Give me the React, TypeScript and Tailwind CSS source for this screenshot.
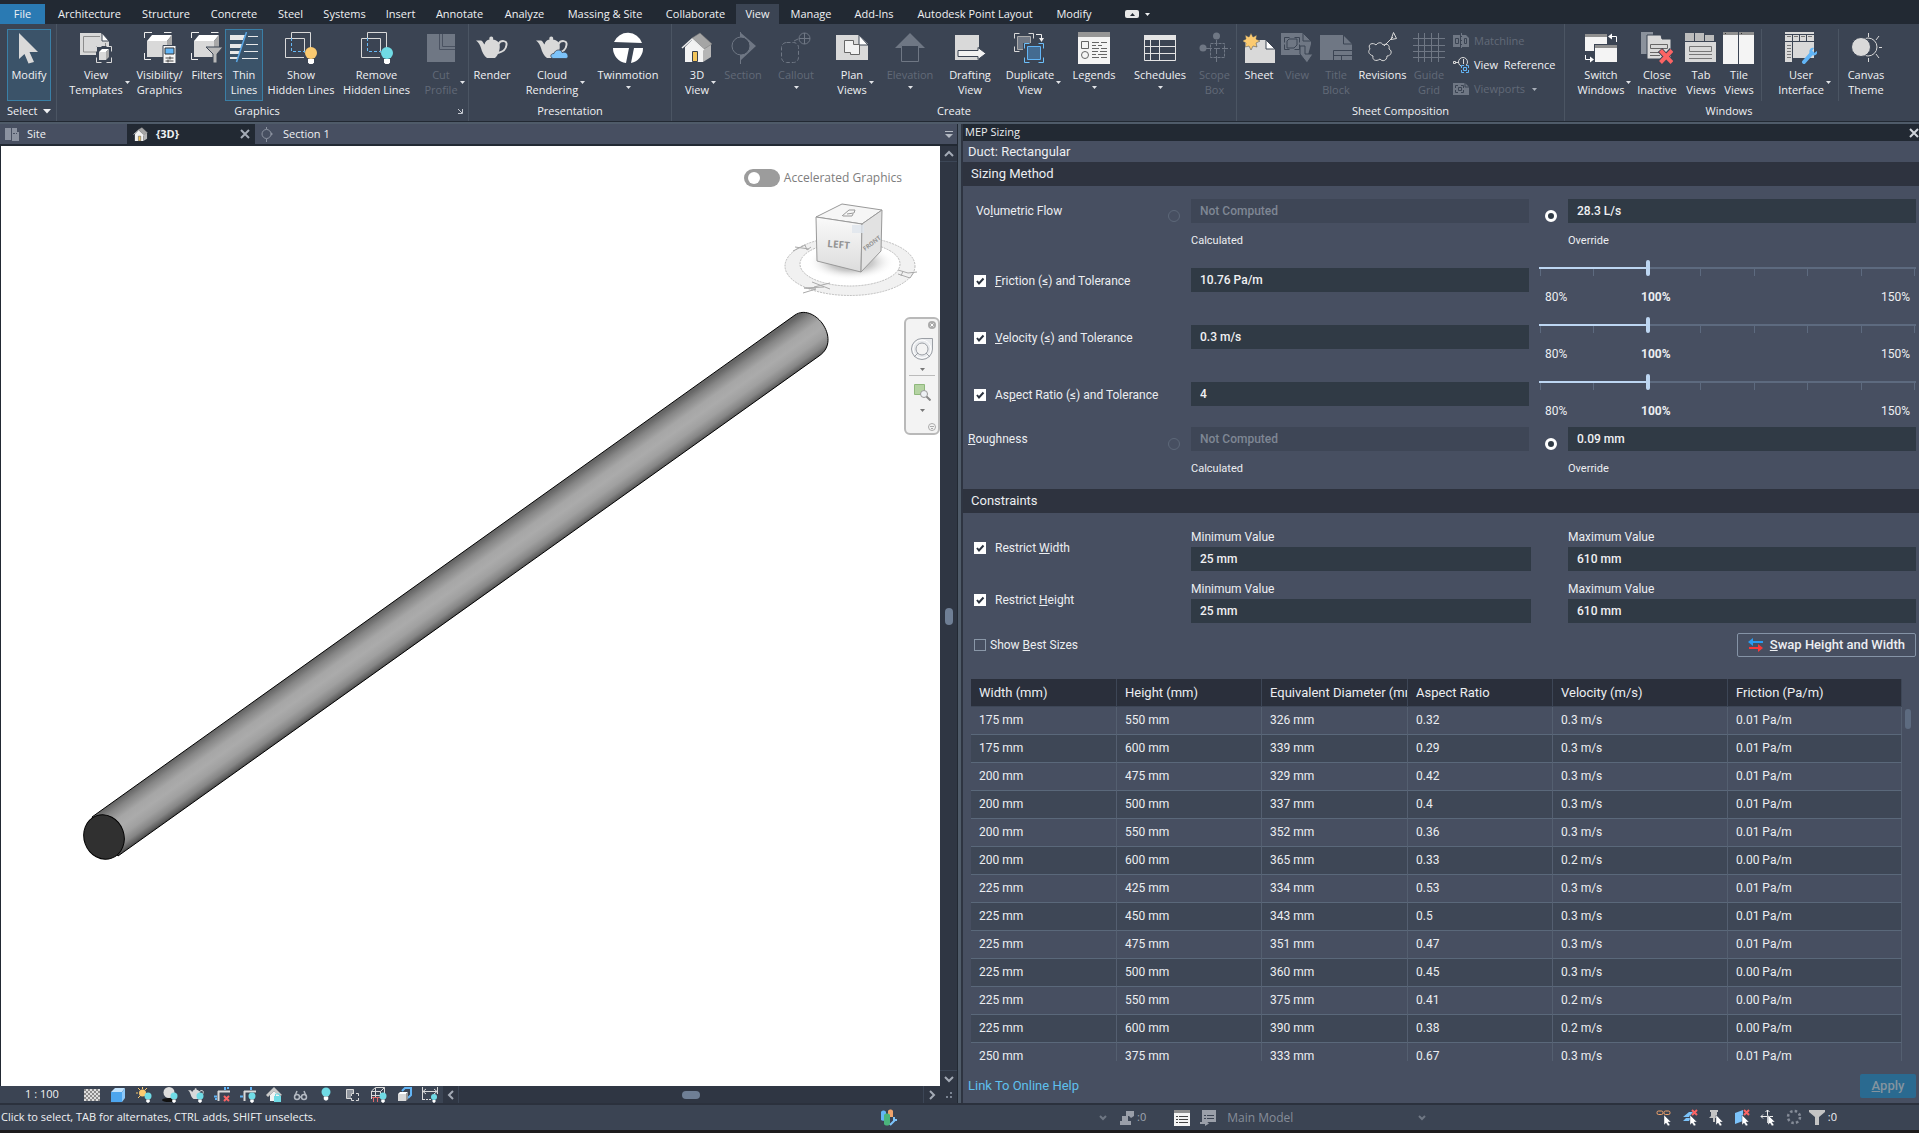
import { useState } from "react";
import type { ReactNode } from "react";
import { twJoin } from "tailwind-merge";

const LIGHT = "#d9d9d9";
const DIM = "#6f7784";
const BG = "#3b4453";

const Icon = ({ size = 32, children }: Readonly<{ size?: number; children: ReactNode }>) => (
  <svg
    className="block shrink-0"
    width={size}
    height={size}
    viewBox={`0 0 ${size} ${size}`}
    fill="none"
    aria-hidden="true"
  >
    {children}
  </svg>
);

const Brackets = ({ x, y, w, h, color = LIGHT }: Readonly<{ x: number; y: number; w: number; h: number; color?: string }>) => (
  <path
    d={`M${x} ${y + 5}V${y}h5M${x + w - 5} ${y}h5v5M${x + w} ${y + h - 5}v5h-5M${x + 5} ${y + h}h-5v-5`}
    stroke={color}
  />
);

const Box = () => (
  <>
    <path d="M3 9 8 3h20l-5 6z" fill="#fff" />
    <path d="M3 9h20v16H3z" fill={LIGHT} />
    <path d="m23 9 5-6v16l-5 6z" fill="#a8a8a8" />
    <path d="M.5 6V.5H8M20 .5h7.5M.5 21v6.5H7" stroke="#eee" />
  </>
);

const Bulb = ({ x, y, r, color }: Readonly<{ x: number; y: number; r: number; color: string }>) => (
  <>
    <circle cx={x} cy={y} r={r} fill={color} />
    <path d={`M${x - r / 2} ${y + r}h${r}v${r * 0.6}l-${r * 0.3} ${r * 0.3}h-${r * 0.4}l-${r * 0.3}-${r * 0.3}z`} fill="#fff" />
  </>
);

const Teapot = () => (
  <>
    <path
      d="M0 8.5h5c1.5 0 2.5 3 3.5 4C9 9.5 11 8 13.5 7.5c-1.5-4 5-4 3.5 0 3 .5 5.5 2 6.5 4.5 1 5-1 11-4.5 14h-8c-3-2-5-6-6-10C4 13 2.5 10 0 8.5z"
      fill={LIGHT}
    />
    <path d="M22.5 12c2-4 9-4 8 1-.5 4-4 7-8.5 8" stroke={LIGHT} strokeWidth="2" />
  </>
);

const House = () => (
  <>
    <path d="M4 15 12 7l10 9v14H4z" fill="#f2f2f2" />
    <path d="m22 15 8-4v14l-8 5z" fill="#b5b5b5" />
    <path d="M11 6 19 1l12 11-8 5z" fill="#a5a5a5" stroke="#777" strokeWidth=".5" />
    <path d="m1 16 10-9 12 11" stroke="#eee" strokeWidth="1.5" />
    <path d="M11.5 29.5v-10h5v10z" fill="#f2c45a" stroke="#39404c" />
  </>
);

const Mini = ({ x, y }: Readonly<{ x: number; y: number }>) => (
  <>
    <path d={`M${x} ${y}h22v17H${x}z`} fill="#f4f4f4" />
    <path d={`M${x} ${y}h22v3H${x}z`} fill="#8f8f8f" />
  </>
);

const ICONS = {
  modify: <path d="M6 1 25 20h-8.5L21 30l-5.5 1.5-4-9.5L6 27z" fill={LIGHT} />,
  templates: (
    <>
      <path d="M0 1h21l8 8v14H0z" fill={LIGHT} />
      <path d="M16 20H3.5V4.5H20M25.5 11v3" stroke="#8c8c8c" />
      <path d="m22 1 7 8h-7z" fill="#fff" stroke={BG} />
      <path d="M16 14h16v17H16z" fill={BG} />
      <Brackets x={16.5} y={14.5} w={15} h={16} />
      <path d="m19 20 3-3h7l-3 3z" fill="#fff" />
      <path d="M19 20h7v8h-7z" fill={LIGHT} />
      <path d="m26 20 3-3v8l-3 3z" fill="#aaa" />
    </>
  ),
  visibility: (
    <>
      <Box />
      <path d="M19 13.5h13v18H19z" fill="#f5f5f5" stroke={BG} />
      <path d="M21 16h9v6h-9z" fill="#62b5f6" stroke="#333" />
      <path d="M21.5 26h8M21.5 29h8M26 24.5v3M24 27.5v3" stroke="#444" />
    </>
  ),
  filters: (
    <>
      <Box />
      <path d="M15 15h17l-6 7v9h-4v-9z" fill="#b8b8b8" stroke={BG} />
    </>
  ),
  thin: (
    <>
      <path d="M2 3h15l-2 5H2zM2 12h12l-1 4H2zM2 19h10l-1 3H2zM2 25h8v2H2z" fill="#e8e8e8" />
      <path d="M20 4.5h10M18 12.5h12M16 19.5h14M14 26.5h16" stroke="#e8e8e8" />
      <path d="M18.5 0 8.5 30" stroke="#5ba7e6" strokeWidth="1.5" />
    </>
  ),
  show: (
    <>
      <path d="M6.5 6V.5h19v17M.5 6.5h19v14M19 25.5H.5v-19" stroke={LIGHT} />
      <path d="M6.5 6v13.5H20" stroke="#66b8f5" strokeDasharray="3 2" />
      <Bulb x={26} y={21} r={6} color="#fbca70" />
    </>
  ),
  remove: (
    <>
      <path d="M6.5 6V.5h19v17M.5 6.5h19v14M19 25.5H.5v-19" stroke={LIGHT} />
      <path d="M6.5 6v13.5H20" stroke="#66b8f5" strokeDasharray="3 2" />
      <Bulb x={26} y={21} r={6} color="#70dbe5" />
    </>
  ),
  cut: (
    <>
      <path d="M2 2h28v28H2z" fill={DIM} />
      <path d="M14.5 2v15.5H30M17.5 2v12.5H30" stroke="#4a5261" />
    </>
  ),
  render: <Teapot />,
  cloud: (
    <>
      <Teapot />
      <path d="M17 26.5c-3-1-3-5 1-5 1-4 7-5 8-1 4-1 6 1 6 4 0 2-2 2-3 2z" fill="#7cc3fa" stroke={BG} strokeWidth=".8" />
    </>
  ),
  twin: (
    <>
      <path d="M2 10a15 15 0 0 1 28 1zM1 16h16l-3 15A15 15 0 0 1 1 16z" fill="#fff" />
      <path d="M22 16h9a15 15 0 0 1-12 15z" fill="#fff" />
    </>
  ),
  house: <House />,
  section: (
    <>
      <path d="m14 1 15 13-15 14V23a9 9 0 0 0 0-17z" fill={DIM} />
      <circle cx="14" cy="14" r="9" fill={BG} stroke={DIM} />
      <path d="M13.5 0v5M13.5 23v9" stroke={DIM} />
    </>
  ),
  callout: (
    <>
      <rect x="1.5" y="10.5" width="17" height="20" rx="5" stroke={DIM} strokeDasharray="4 2" />
      <path d="m14 9 4-2M19 6.5h11M24.5 1v11" stroke={DIM} />
      <circle cx="24.5" cy="6.5" r="5.5" stroke={DIM} />
    </>
  ),
  plan: (
    <>
      <path d="M0 3h23l9 9v16H0z" fill={LIGHT} />
      <path d="m23 3 9 10h-9z" fill="#fff" stroke={BG} />
      <path d="M8.5 8.5h9v4h6v10h-9v-2h-6z" fill="#f2f2f2" stroke="#666" />
    </>
  ),
  elevation: (
    <>
      <path d="m16 1 15 15H1z" fill={DIM} />
      <path d="M7.5 13.5h17v16h-17z" fill={BG} stroke={DIM} />
    </>
  ),
  drafting: (
    <>
      <path d="M1 3h24v25H1z" fill={LIGHT} />
      <path d="M4 18.5h20v-3l8 6-8 6v-3H4z" fill="#f2f2f2" stroke={BG} />
    </>
  ),
  duplicate: (
    <>
      <Brackets x={0.5} y={1.5} w={19} h={18} />
      <path d="M3.5 4.5h13v13h-13z" fill={DIM} stroke="#aaa" />
      <path d="M9 11h23v21H9z" fill={BG} />
      <Brackets x={10.5} y={11.5} w={19} h={19} color="#6cc0fb" />
      <path d="M13.5 14.5h13v13h-13z" fill="#446b91" stroke="#62b5f6" />
      <path d="M22 2.5h5.5V7" stroke="#eee" />
      <path d="M25 6h5l-2.5 4z" fill="#eee" />
    </>
  ),
  legends: (
    <>
      <path d="M0 0h32v32H0z" fill="#f4f4f4" />
      <path d="M0 0h32v5H0z" fill="#969696" />
      <path
        d="M3.5 9.5h7v7h-7zM14 10.5h7M23 10.5h6M14 13.5h4M20 13.5h4M14 16.5h7M23 16.5h6M14 19.5h6M22 19.5h7M14 22.5h4M20 22.5h9M14 25.5h7M23 25.5h6"
        stroke="#666"
      />
      <circle cx="7" cy="23" r="3.5" stroke="#666" />
    </>
  ),
  schedules: (
    <>
      <path d="M.5 3.5h31v25H.5zM0 14.5h32M0 21.5h32M6.5 8v20M15.5 8v20" stroke="#e4e4e4" />
      <path d="M0 3h32v5H0z" fill="#e4e4e4" />
    </>
  ),
  scope: (
    <>
      <circle cx="4" cy="16" r="3.5" fill={DIM} />
      <circle cx="17.5" cy="4" r="3.5" fill={DIM} />
      <path d="M7 16.5h25M17.5 8v24" stroke={DIM} strokeDasharray="6 2" />
      <path d="M11.5 11.5h14v14h-14z" stroke={DIM} strokeDasharray="3 1" />
    </>
  ),
  sheet: (
    <>
      <path d="M2 8h21l9 9v14H2z" fill={LIGHT} />
      <path d="m23 8 9 9h-9z" fill="#fff" stroke={BG} />
      <path d="m8 1 2 4 4-2-1 4 4 2-4 2 1 4-4-1-2 4-2-4-4 1 1-4-4-2 4-2-1-4 4 2z" fill="#fbca70" stroke={BG} strokeWidth=".5" />
    </>
  ),
  view: (
    <>
      <path d="M0 1h22l8 8v3l-3 11H0z" fill={DIM} />
      <Brackets x={3.5} y={5.5} w={15} h={12} color={BG} />
      <path d="m6 9 2-2h8v6l-3 3H6z" stroke={BG} />
      <path d="M19 14h5v8h8l-6 9-7-9z" fill={DIM} stroke={BG} />
      <path d="m22 1 8 8h-8z" fill={DIM} stroke={BG} />
    </>
  ),
  title: (
    <>
      <path d="M0 3h23l9 9v16H0z" fill={DIM} />
      <path d="M23.5 2v10H33" stroke={BG} />
      <path d="M13.5 28v-9.5H32M14 23.5h18M21.5 24v4" stroke={BG} />
    </>
  ),
  revisions: (
    <>
      <path d="M6 24c-5-2-5-5-3-7-3-5 3-7 6-4 2-3 6-3 7 0 4-2 7 0 6 4 4 2 2 7-2 7 0 5-5 6-7 3-4 3-8 1-7-3z" stroke={LIGHT} />
      <path d="m17 14 9-9M24 7.5l2.5-7 3 6z" stroke={LIGHT} />
    </>
  ),
  grid: <path d="M0 6.5h32M0 13.5h32M0 19.5h32M0 25.5h32M5.5 1v29M11.5 1v29M18.5 1v29M25.5 1v29" stroke={DIM} />,
  switch: (
    <>
      <Mini x={0} y={2} />
      <path d="M9 12h23v18H9z" fill={BG} />
      <Mini x={10} y={13} />
      <path d="M25 4.5h6.5V10M.5 23v4.5H6" stroke="#fff" />
      <path d="m23 4.5 4-3v6zM9 27.5l-4-3v6z" fill="#fff" />
    </>
  ),
  close: (
    <>
      <path d="M0 0h12v22H0z" fill="#8b929c" />
      <path d="M6 3h14l1 4h9v20H6z" fill={LIGHT} stroke={BG} />
      <path d="M9.5 12.5h17v4h-17zM9 20.5h13M9 23.5h10" stroke="#666" />
      <path d="m19 18 12 13M31 18 19 31" stroke={BG} strokeWidth="6" />
      <path d="m19.5 18.5 11.5 12M31 18.5l-11.5 12" stroke="#fb6464" strokeWidth="4" />
    </>
  ),
  tab: (
    <>
      <path d="M0 1h9v8H0zM10 1h9v8h-9zM20 3h9v6h-9z" fill="#bcbcbc" />
      <path d="M0 10h31v20H0z" fill={LIGHT} />
      <path d="M4.5 14.5h22v5h-22zM4 22.5h23M4 26.5h23" stroke="#777" />
    </>
  ),
  tile: (
    <>
      <path d="M0 0h15v32H0zM16 0h15v32H16z" fill="#f4f4f4" />
      <path d="M0 0h15v3H0zM16 0h15v3H16z" fill="#8f8f8f" />
      <path d="M2 1h1v1H2zM18 1h1v1h-1z" fill="#333" />
    </>
  ),
  user: (
    <>
      <path d="M0 0h29v2H0zM0 3h29v6H0zM0 10h7v20H0zM8 10h21v16H8z" fill={LIGHT} />
      <path d="M7.5 3v6M14.5 3v6M21.5 3v6" stroke={BG} />
      <path d="M2 4.5h4M9 4.5h4M16 4.5h4M23 4.5h4M2 13.5h4M2 16.5h4M2 19.5h4M2 22.5h4M2 25.5h4" stroke="#777" />
      <path d="m19 30 8-9" stroke="#62b5f6" strokeWidth="4" strokeLinecap="round" />
      <path d="M25 22c-2-4 1-7 4-6l-2 3 2 2 3-2c1 4-3 6-7 3z" fill="#62b5f6" />
    </>
  ),
  canvas: (
    <>
      <circle cx="18" cy="15" r="9" stroke={LIGHT} />
      <path d="M18.5 1v4M18.5 26v4M26 8l3-4M26 22l3 4M29 15.5h4" stroke={LIGHT} />
      <circle cx="11" cy="15" r="9.5" fill={LIGHT} stroke={BG} />
    </>
  ),
};

type Tool = {
  icon: keyof typeof ICONS;
  lines: string[];
  width: string;
  disabled?: boolean;
  active?: boolean;
  menu?: "side" | "below";
};

const TABS = [
  ["Architecture", "w-[85px]"],
  ["Structure", "w-[68px]"],
  ["Concrete", "w-[68px]"],
  ["Steel", "w-[45px]"],
  ["Systems", "w-[63px]"],
  ["Insert", "w-[49px]"],
  ["Annotate", "w-[69px]"],
  ["Analyze", "w-[61px]"],
  ["Massing & Site", "w-[100px]"],
  ["Collaborate", "w-[81px]"],
  ["View", "w-[43px]"],
  ["Manage", "w-[64px]"],
  ["Add-Ins", "w-[62px]"],
  ["Autodesk Point Layout", "w-[140px]"],
  ["Modify", "w-[58px]"],
];

const GRAPHICS: Tool[] = [
  { icon: "templates", lines: ["View", "Templates"], width: "w-[68px]", menu: "side" },
  { icon: "visibility", lines: ["Visibility/", "Graphics"], width: "w-[59px]" },
  { icon: "filters", lines: ["Filters"], width: "w-9" },
  { icon: "thin", lines: ["Thin", "Lines"], width: "w-[38px]", active: true },
  { icon: "show", lines: ["Show", "Hidden Lines"], width: "w-[76px]" },
  { icon: "remove", lines: ["Remove", "Hidden Lines"], width: "w-[75px]" },
  { icon: "cut", lines: ["Cut", "Profile"], width: "w-[54px]", disabled: true, menu: "side" },
];

const PRESENTATION: Tool[] = [
  { icon: "render", lines: ["Render"], width: "w-[46px]" },
  { icon: "cloud", lines: ["Cloud", "Rendering"], width: "w-[74px]", menu: "side" },
  { icon: "twin", lines: ["Twinmotion"], width: "w-[78px]", menu: "below" },
];

const CREATE: Tool[] = [
  { icon: "house", lines: ["3D", "View"], width: "w-11", menu: "side" },
  { icon: "section", lines: ["Section"], width: "w-12", disabled: true },
  { icon: "callout", lines: ["Callout"], width: "w-[58px]", disabled: true, menu: "below" },
  { icon: "plan", lines: ["Plan", "Views"], width: "w-[54px]", menu: "side" },
  { icon: "elevation", lines: ["Elevation"], width: "w-[62px]", disabled: true, menu: "below" },
  { icon: "drafting", lines: ["Drafting", "View"], width: "w-[58px]" },
  { icon: "duplicate", lines: ["Duplicate", "View"], width: "w-[62px]", menu: "side" },
  { icon: "legends", lines: ["Legends"], width: "w-[66px]", menu: "below" },
  { icon: "schedules", lines: ["Schedules"], width: "w-[66px]", menu: "below" },
  { icon: "scope", lines: ["Scope", "Box"], width: "w-[43px]", disabled: true },
];

const SHEETS: Tool[] = [
  { icon: "sheet", lines: ["Sheet"], width: "w-[38px]" },
  { icon: "view", lines: ["View"], width: "w-[38px]", disabled: true },
  { icon: "title", lines: ["Title", "Block"], width: "w-10", disabled: true },
  { icon: "revisions", lines: ["Revisions"], width: "w-[53px]" },
  { icon: "grid", lines: ["Guide", "Grid"], width: "w-10", disabled: true },
];

const WINDOWS: Tool[] = [
  { icon: "switch", lines: ["Switch", "Windows"], width: "w-16", menu: "side" },
  { icon: "close", lines: ["Close", "Inactive"], width: "w-12" },
  { icon: "tab", lines: ["Tab", "Views"], width: "w-10" },
  { icon: "tile", lines: ["Tile", "Views"], width: "w-9" },
];

const Arrow = ({ className = "" }: Readonly<{ className?: string }>) => (
  <svg className={twJoin("block shrink-0", className)} width="5" height="3" viewBox="0 0 5 3" aria-hidden="true">
    <path d="M0 0h5L2.5 3z" fill="currentColor" />
  </svg>
);

const ToolButton = ({ tool }: Readonly<{ tool: Tool }>) => (
  <button
    type="button"
    disabled={tool.disabled}
    className={twJoin(
      "flex h-[72px] shrink-0 flex-col items-center pt-[3px] leading-[15px] whitespace-nowrap",
      tool.width,
      tool.disabled ? "text-[#626a78]" : "text-[#f0f1f3]",
      tool.active && "bg-[#3b5369] outline -outline-offset-1 outline-[#3a7fa6]",
    )}
  >
    <Icon>{ICONS[tool.icon]}</Icon>
    <span className="relative mt-[3px] block">
      {tool.lines.map((line) => (
        <span key={line} className="block">
          {line}
        </span>
      ))}
      {tool.menu === "side" && <Arrow className="absolute top-3.5 left-full ml-0.5 text-[#e2e4e8]" />}
    </span>
    {tool.menu === "below" && <Arrow className="mt-1 text-[#e2e4e8]" />}
  </button>
);

const Panel = ({ title, className, children, footer }: Readonly<{ title: string; className?: string; children: ReactNode; footer?: ReactNode }>) => (
  <section className="flex shrink-0 flex-col border-r border-[#4b5563] pt-[5px]">
    <div className={twJoin("flex", className)}>{children}</div>
    <div className="flex h-5 items-center">
      <h2 className="flex-1 text-center">{title}</h2>
      {footer}
    </div>
  </section>
);

const tools = (list: Tool[]) => list.map((tool) => <ToolButton key={tool.icon} tool={tool} />);

const Ribbon = () => (
  <header className="shrink-0 bg-[#222933] text-[11px] text-[#f0f1f3]">
    <nav className="flex h-6 pt-1">
      <button type="button" className="mr-0.5 w-[45px] bg-[#2a7ab3]">
        File
      </button>
      {TABS.map(([label, width]) => (
        <button
          key={label}
          type="button"
          className={twJoin("shrink-0 whitespace-nowrap", width, label === "View" && "bg-[#3b4453]")}
        >
          {label}
        </button>
      ))}
      <button type="button" aria-label="Ribbon display" className="ml-[22px] flex items-center gap-1.5">
        <span className="flex h-2 w-3.5 items-center justify-center rounded-xs bg-[#e8e8e8] text-[#222933]">
          <Arrow className="rotate-180" />
        </span>
        <Arrow />
      </button>
    </nav>
    <div className="flex h-[97px] bg-[#3b4453]">
      <section className="flex w-[57px] shrink-0 flex-col border-r border-[#4b5563] pt-[5px] pl-[7px]">
        <ToolButton tool={{ icon: "modify", lines: ["Modify"], width: "w-11", active: true }} />
        <button type="button" className="flex h-5 items-center gap-1.5">
          Select
          <svg width="8" height="5" viewBox="0 0 8 5" aria-hidden="true">
            <path d="M0 0h8L4 4.5z" fill="currentColor" />
          </svg>
        </button>
      </section>
      <Panel
        title="Graphics"
        className="pl-[5px]"
        footer={
          <svg className="mr-[5px]" width="6" height="6" viewBox="0 0 6 6" fill="none" aria-hidden="true">
            <path d="m1 1 4 4M5.5 1v4.5H1" stroke="#c5c9d0" />
          </svg>
        }
      >
        {tools(GRAPHICS)}
      </Panel>
      <Panel title="Presentation" className="pr-1">
        {tools(PRESENTATION)}
      </Panel>
      <Panel title="Create" className="pl-[3px]">
        {tools(CREATE)}
      </Panel>
      <Panel title="Sheet Composition" className="pl-[3px]">
        {tools(SHEETS)}
        <div className="flex w-[115px] flex-col gap-2 pt-1 pl-1 leading-4">
          <button type="button" disabled className="flex items-center gap-[5px] text-[#626a78]">
            <Icon size={16}>
              <path d="M0 2h7v12H0zM9 2h4l3 3v9H9z" fill={DIM} />
              <path d="M8.5 0v16" stroke={DIM} strokeDasharray="3 1" />
              <path d="M2.5 5.5h3v5h-3zM11.5 5.5h2v5h-2z" stroke={BG} />
            </Icon>
            Matchline
          </button>
          <button type="button" className="flex items-center gap-[5px] whitespace-pre">
            <Icon size={16}>
              <circle cx="10" cy="5" r="4.5" stroke={LIGHT} />
              <path d="M.5 4.5h2v2h-2zM3 5.5h3M10.5 2v5" stroke={LIGHT} />
              <path d="M8 8h8v8H8z" fill={BG} />
              <path d="M8.5 11V8.5H11M13 8.5h2.5V11M15.5 13v2.5H13M11 15.5H8.5V13M10.5 10.5h3v3h-3z" stroke="#62b5f6" />
            </Icon>
            {"View  Reference"}
          </button>
          <button type="button" disabled className="flex items-center gap-[5px] text-[#626a78]">
            <Icon size={16}>
              <path d="M0 2h12l4 4v8H0z" fill={DIM} />
              <path d="M2.5 7V4.5H5M8 4.5h2.5V7M10.5 9v2.5H8M5 11.5H2.5V9M5.5 6.5h3v3h-3zM12 2v4h4" stroke={BG} />
            </Icon>
            Viewports
            <Arrow className="ml-0.5 text-[#a9afb9]" />
          </button>
        </div>
      </Panel>
      <section className="flex shrink-0 flex-col pt-[5px]">
        <div className="flex pl-1">
          {tools(WINDOWS)}
          <div className="ml-1 border-l border-[#4b5563] pl-0.5">
            <ToolButton tool={{ icon: "user", lines: ["User", "Interface"], width: "w-[74px]", menu: "side" }} />
          </div>
          <div className="border-l border-[#4b5563]">
            <ToolButton tool={{ icon: "canvas", lines: ["Canvas", "Theme"], width: "w-[54px]" }} />
          </div>
        </div>
        <h2 className="h-5 text-center leading-5">Windows</h2>
      </section>
    </div>
  </header>
);

const Chevron = ({ d, className = "text-[#a4abb6]" }: Readonly<{ d: string; className?: string }>) => (
  <svg className={className} width="10" height="10" viewBox="0 0 10 10" fill="none" aria-hidden="true">
    <path d={d} stroke="currentColor" strokeWidth="2" />
  </svg>
);

const DocTabs = () => (
  <div className="flex h-[22px] shrink-0 border-b-2 border-[#222933] bg-[#474f61] text-[11px] text-[#f0f1f3]">
    <button type="button" className="flex w-[127px] items-center gap-2 pl-[5px]">
      <Icon size={14}>
        <path d="M0 1h6v12H0zM7 1h5v4h2v9H7z" fill="#8b92a0" />
        <path d="M8 6.5h4M6.5 2v10" stroke="#474f61" strokeDasharray="2 1" />
      </Icon>
      Site
    </button>
    <div className="flex w-32 items-center bg-[#222933] pl-1.5">
      <button type="button" className="flex flex-1 items-center gap-2 font-bold">
        <svg width="15" height="15" viewBox="0 0 32 32" fill="none" aria-hidden="true">
          <House />
        </svg>
        {"{3D}"}
      </button>
      <button type="button" aria-label="Close view" className="mr-[5px]">
        <Chevron d="m1 1 8 8M9 1 1 9" />
      </button>
    </div>
    <button type="button" className="flex flex-1 items-center gap-2 pl-[5px]">
      <Icon size={15}>
        <path d="m7 2 6 5-6 5" fill="#8b92a0" />
        <circle cx="6.5" cy="7" r="4.5" fill="#474f61" stroke="#8b92a0" />
        <path d="M6.5 0v2M6.5 12v3" stroke="#8b92a0" />
      </Icon>
      Section 1
    </button>
    <button type="button" aria-label="Open views" className="mr-1">
      <svg width="8" height="7" viewBox="0 0 8 7" aria-hidden="true">
        <path d="M0 0h8v1H0zM0 3h8L4 7z" fill="#b3b9c2" />
      </svg>
    </button>
  </div>
);

const Pipe = () => (
  <svg className="block" width="939" height="939" viewBox="1 146 939 939" fill="none" aria-label="Round duct">
    <defs>
      <linearGradient id="pipe" gradientUnits="userSpaceOnUse" x1="93" y1="817" x2="120" y2="855">
        <stop offset="0" stopColor="#666" />
        <stop offset=".14" stopColor="#868686" />
        <stop offset=".34" stopColor="#a6a6a6" />
        <stop offset=".5" stopColor="#ababab" />
        <stop offset=".68" stopColor="#a0a0a0" />
        <stop offset=".84" stopColor="#858585" />
        <stop offset=".94" stopColor="#606060" />
        <stop offset="1" stopColor="#404040" />
      </linearGradient>
    </defs>
    <path d="M92 817 795 315C804 309 815 314 822 323 830 334 831 348 819 356L118 856z" fill="url(#pipe)" stroke="#000" />
    <ellipse cx="104" cy="837" rx="20" ry="22.5" transform="rotate(-20 104 837)" fill="#303030" stroke="#000" />
  </svg>
);

const ViewCube = () => (
  <svg width="136" height="98" viewBox="782 202 136 98" fill="none" aria-label="View cube">
    <defs>
      <linearGradient id="cubeLeft" x1="0" y1="0" x2="0" y2="1">
        <stop offset="0" stopColor="#fafafa" />
        <stop offset="1" stopColor="#dcdcdc" />
      </linearGradient>
      <radialGradient id="cubeShadow">
        <stop offset="0" stopColor="#999" />
        <stop offset=".5" stopColor="#ccc" />
        <stop offset="1" stopColor="#fff" stopOpacity="0" />
      </radialGradient>
    </defs>
    <ellipse cx="850" cy="266" rx="65" ry="29.5" fill="#f1f1f1" stroke="#bbb" strokeDasharray="2 1" />
    <ellipse cx="850" cy="264" rx="50" ry="22" fill="#fff" stroke="#bbb" strokeDasharray="2 1" />
    <ellipse cx="851" cy="262" rx="44" ry="18" fill="url(#cubeShadow)" />
    <path d="M816 217 842 204l40 6-20 14z" fill="#f6f6f6" stroke="#999" />
    <path d="m816 217 46 7-1 48-44-11z" fill="url(#cubeLeft)" stroke="#999" />
    <path d="m862 224 20-14-1 41-20 21z" fill="#e2e2e2" stroke="#999" />
    <path d="M852 225h12v8h-12z" fill="#dfe5ec" opacity=".8" />
    <path d="m842 216 7-6h6l-1 3-7 1m6 0-1 2h-9" stroke="#999" />
    <path
      d="m793 251 12-6 2 5 4-3M795 247l14 2M803 293l13-4-12-1 20-1M812 282l18 7M814 287l16-4M898 270l10 3 9-1M898 274l12 4 4-6M903 271l-2 5"
      stroke="#aaa"
    />
    <g fill="#939393" fontFamily="Open Sans, sans-serif" fontWeight="700">
      <text x="827" y="247" transform="rotate(5 827 247)" fontSize="10">LEFT</text>
      <text x="865" y="251" transform="rotate(-37 865 251)" fontSize="6">FRONT</text>
    </g>
  </svg>
);

const NavBar = () => (
  <div className="flex h-[118px] w-9 flex-col items-center rounded-md border-2 border-[#b9b9b9] bg-[#f3f3f3] text-[#777]">
    <button type="button" aria-label="Close navigation" className="mt-0.5 mr-0.5 self-end">
      <Icon size={8}>
        <circle cx="4" cy="4" r="4" fill="#aaa" />
        <path d="m2.5 2.5 3 3M5.5 2.5l-3 3" stroke="#fff" />
      </Icon>
    </button>
    <button type="button" aria-label="Steering wheel" className="mt-2">
      <Icon size={24}>
        <path d="M12 1.5h10.5V12A10.5 10.5 0 1 1 12 1.5z" stroke="#9b9fa5" fill="#e9ebee" />
        <circle cx="12" cy="12" r="9" stroke="#fff" />
        <circle cx="12" cy="12" r="6" stroke="#9b9fa5" fill="#f3f3f3" />
        <path d="m4 20 4-4M20 20l-4-4" stroke="#9b9fa5" />
      </Icon>
    </button>
    <Arrow className="mt-[7px]" />
    <div className="mt-1 h-px w-[26px] bg-[#bbb]" />
    <button type="button" aria-label="Zoom" className="mt-[7px]">
      <Icon size={18}>
        <path d="M1.5 1.5h10v10h-10z" fill="#b4d3a2" stroke="#8fb87c" />
        <circle cx="11" cy="11" r="3.5" fill="#eef1f4" stroke="#999" />
        <path d="m13.5 13.5 4 4" stroke="#888" strokeWidth="2" />
      </Icon>
    </button>
    <Arrow className="mt-2" />
    <button type="button" aria-label="Navigation options" className="mt-auto mr-0.5 mb-0.5 self-end">
      <Icon size={8}>
        <circle cx="4" cy="4" r="3.5" stroke="#aaa" />
        <path d="M2 3.5h4M3 5.5h2" stroke="#aaa" />
      </Icon>
    </button>
  </div>
);

const CYAN = "#70dbe5";

const VIEW_ICONS: { name: string; art: ReactNode }[] = [
  {
    name: "Detail level",
    art: (
      <>
        <path d="M0 3h16v12H0z" fill="#ddd" />
        <path d="M0 4h16M0 8h16M0 12h16" stroke="#8a8a8a" strokeWidth="2" strokeDasharray="2 2" />
        <path d="M2 6h14M2 10h14M2 14h14" stroke="#8a8a8a" strokeWidth="2" strokeDasharray="2 2" />
      </>
    ),
  },
  {
    name: "Visual style",
    art: (
      <>
        <path d="m1 6 4-4h10l-3 4z" fill="#c4e4fd" />
        <path d="M1 6h11v10H1z" fill="#4da6ee" />
        <path d="m12 6 3-4v10l-3 4z" fill="#8cc9fa" />
      </>
    ),
  },
  {
    name: "Sun path",
    art: (
      <>
        <circle cx="6.5" cy="7" r="3.5" fill="#fbca70" />
        <path d="M6.5 1v2M0 7h2M2 2l2 2M11 2 9 4M2 12l2-2" stroke="#fbca70" />
        <Bulb x={12} y={10} r={3.5} color={CYAN} />
      </>
    ),
  },
  {
    name: "Shadows",
    art: (
      <>
        <ellipse cx="7" cy="14" rx="7" ry="2" fill="#111" />
        <circle cx="7" cy="6.5" r="5.5" fill="#ddd" />
        <Bulb x={12} y={10} r={3.5} color={CYAN} />
      </>
    ),
  },
  {
    name: "Rendering dialog",
    art: (
      <>
        <g transform="scale(.5)">
          <Teapot />
        </g>
        <Bulb x={12} y={10} r={3.5} color={CYAN} />
      </>
    ),
  },
  {
    name: "Crop view",
    art: (
      <>
        <path d="M4 5.5h12M4.5 5v10" stroke={LIGHT} strokeWidth="2" />
        <path d="M11 1v3M0 10.5h3M14 1v2M1 13h2" stroke="#62b5f6" strokeWidth="2" />
        <path d="m10 10 5 5M15 10l-5 5" stroke="#fb6464" strokeWidth="2" />
      </>
    ),
  },
  {
    name: "Crop region",
    art: (
      <>
        <path d="M4 5.5h12M4.5 5v10" stroke={LIGHT} strokeWidth="2" />
        <path d="M11 1v3M0 10.5h3" stroke="#62b5f6" strokeWidth="2" />
        <Bulb x={12} y={10} r={3.5} color={CYAN} />
      </>
    ),
  },
  {
    name: "Lock view",
    art: (
      <>
        <path d="m4 9 4-4 6 5v5H4z" fill="#f2f2f2" />
        <path d="m0 9 8-8 8 8-2 1-6-5-6 6z" fill="#c9c9c9" />
        <path d="M8 10h7v6H8z" fill={CYAN} />
        <path d="M9.5 10V8h4v2" stroke={CYAN} />
      </>
    ),
  },
  {
    name: "Temporary hide",
    art: (
      <>
        <circle cx="5" cy="11" r="2.5" stroke="#b3b9c2" strokeWidth="1.5" />
        <circle cx="12" cy="11" r="2.5" stroke="#b3b9c2" strokeWidth="1.5" />
        <path d="M3 10 5 5M14 10l-2-5M7 11h3" stroke="#b3b9c2" strokeWidth="1.5" />
      </>
    ),
  },
  { name: "Reveal hidden", art: <Bulb x={8} y={6} r={4.5} color={CYAN} /> },
  {
    name: "Temporary properties",
    art: (
      <>
        <path d="M2.5 3.5h7v9h-7z" fill="#8f959e" stroke={LIGHT} />
        <path d="M7 7h8v9H7z" fill={BG} />
        <path d="M7.5 10V7.5H10M12 7.5h2.5V10M14.5 12v2.5H12M10 14.5H7.5V12" stroke={LIGHT} />
      </>
    ),
  },
  {
    name: "Analytical model",
    art: (
      <>
        <path d="M1.5 13V5l4-3.5h9V8M1.5 5.5h9v5M5.5 2v9M10.5 5.5l4-4M1 9.5h9" stroke={LIGHT} />
        <path d="M2 11.5h8M3.5 11v5M7.5 11v5" stroke="#e06a6a" />
        <Bulb x={13} y={10} r={3.5} color={CYAN} />
      </>
    ),
  },
  {
    name: "Displacement sets",
    art: (
      <>
        <path d="m6 5 3-3h6v7l-3 3" stroke="#62b5f6" strokeWidth="2" />
        <path d="m2 8 2-2h8l-2 2z" fill="#fff" />
        <path d="M2 8h8v7H2z" fill={LIGHT} />
        <path d="m10 8 2-2v7l-2 2z" fill="#999" />
      </>
    ),
  },
  {
    name: "Constraints",
    art: (
      <>
        <path d="M.5 1v13M15.5 1v7M1 5.5h14" stroke={LIGHT} />
        <path d="M1 13.5h9" stroke={LIGHT} strokeDasharray="2 1" />
        <path d="m4 3-3 2.5L4 8M12 3l3 2.5L12 8" stroke={LIGHT} />
        <Bulb x={12} y={11} r={3} color={CYAN} />
      </>
    ),
  },
];

const ViewPane = () => (
  <div className="flex min-w-0 flex-col border-r border-[#222933] bg-[#222933]">
    <DocTabs />
    <div className="flex min-h-0 flex-1 pl-px">
      <div className="relative min-w-0 flex-1 overflow-hidden bg-white">
        <Pipe />
        <label className="absolute top-[22px] right-[38px] flex items-center gap-1 text-[12px] leading-5 text-[#7d7d7d]">
          <input type="checkbox" role="switch" className="peer sr-only" />
          <span className="flex h-[18px] w-9 items-center rounded-full bg-[#9c9c9c] pl-1">
            <span className="size-3 rounded-full bg-white" />
          </span>
          Accelerated Graphics
        </label>
        <div className="absolute top-14 right-[22px]">
          <ViewCube />
        </div>
        <div className="absolute top-[171px] right-0">
          <NavBar />
        </div>
      </div>
      <div className="flex w-[17px] flex-col items-center justify-between bg-[#2f3643]">
        <button type="button" aria-label="Scroll up" className="flex h-4 w-full items-center justify-center border-b border-[#3c4656]">
          <Chevron d="m1 7 4-4 4 4" />
        </button>
        <div className="h-[17px] w-2 rounded bg-[#6f7f95]" />
        <button type="button" aria-label="Scroll down" className="flex h-4 w-full items-center justify-center border-t border-[#3c4656]">
          <Chevron d="m1 3 4 4 4-4" />
        </button>
      </div>
    </div>
    <div className="flex h-[17px] shrink-0 items-center bg-[#2f3643]">
      <div className="flex h-full shrink-0 items-center bg-[#3b4453] pl-[25px] text-[11px] text-[#f0f1f3]">
        <button type="button" className="w-[54px] text-left whitespace-nowrap">1 : 100</button>
        {VIEW_ICONS.map(({ name, art }) => (
          <button key={name} type="button" aria-label={name} className="flex w-[26px] justify-center">
            <Icon size={17}>{art}</Icon>
          </button>
        ))}
      </div>
      <button type="button" aria-label="Scroll left" className="flex h-full w-4 items-center justify-center border-r border-[#3c4656]">
        <Chevron d="M7 1 3 5l4 4" />
      </button>
      <div className="flex flex-1 justify-center">
        <div className="h-2 w-[18px] rounded bg-[#6f7f95]" />
      </div>
      <button type="button" aria-label="Scroll right" className="flex h-full w-[17px] items-center justify-center border-l border-[#3c4656]">
        <Chevron d="m3 1 4 4-4 4" />
      </button>
      <svg className="mx-1" width="9" height="9" viewBox="0 0 9 9" aria-hidden="true">
        <path d="M2 6h2v2H2zM6 6h2v2H6zM6 2h2v2H6z" fill="#7b8492" />
      </svg>
    </div>
  </div>
);

const Check = ({ id, defaultChecked = false }: Readonly<{ id: string; defaultChecked?: boolean }>) => (
  <span className="grid size-3 shrink-0">
    <input
      id={id}
      type="checkbox"
      defaultChecked={defaultChecked}
      className="peer size-3 appearance-none border border-[#8a97a8] [grid-area:1/1] checked:border-white checked:bg-white"
    />
    <svg className="pointer-events-none hidden size-3 [grid-area:1/1] peer-checked:block" viewBox="0 0 12 12" fill="none" aria-hidden="true">
      <path d="m3 6 2 2.5 4.5-5" stroke="#2c3440" strokeWidth="2" />
    </svg>
  </span>
);

const FIELD = "h-6 w-full min-w-0 bg-[#303a45] px-[9px] font-medium text-[#f0f1f3] disabled:bg-[#3e4656] disabled:text-[#7f8794]";
const RADIO =
  "size-3 shrink-0 appearance-none rounded-full border border-[#5d6879] checked:border-3 checked:border-white checked:bg-[#303a45]";
const GRID = "grid grid-cols-[228px_minmax(0,338fr)_39px_minmax(0,348fr)] pr-[3px]";

const ChoiceRow = ({ name, label, value, className }: Readonly<{ name: string; label: ReactNode; value: string; className: string }>) => (
  <div className={twJoin(GRID, className)}>
    <div className="flex h-6 justify-between pr-[11px]">
      <span className="leading-6">{label}</span>
      <input type="radio" name={name} disabled aria-label={`${name} calculated`} className={twJoin(RADIO, "mt-[11px]")} />
    </div>
    <label className="flex flex-col gap-2.5 text-[11px] leading-4">
      <input className={twJoin(FIELD, "text-[12px]")} defaultValue="Not Computed" disabled />
      Calculated
    </label>
    <div className="flex justify-end pr-[11px]">
      <input type="radio" name={name} defaultChecked aria-label={`${name} override`} className={twJoin(RADIO, "mt-[11px]")} />
    </div>
    <label className="flex flex-col gap-2.5 text-[11px] leading-4">
      <input className={twJoin(FIELD, "text-[12px]")} defaultValue={value} />
      Override
    </label>
  </div>
);

const ToleranceRow = ({ id, label, value }: Readonly<{ id: string; label: ReactNode; value: string }>) => {
  const [tolerance, setTolerance] = useState(100);
  const fill = ((tolerance - 80) / 70) * 100;

  return (
    <div className={twJoin(GRID, "h-[57px]")}>
      <div className="mt-[13px] flex h-6 items-center gap-[9px] pl-[11px]">
        <Check id={id} defaultChecked />
        <label htmlFor={id}>{label}</label>
      </div>
      <input aria-label={`${id} limit`} className={twJoin(FIELD, "mt-3")} defaultValue={value} />
      <div className="col-span-2 ml-2.5 pt-1">
        <div className="grid">
          <div className="flex justify-between px-px pt-2 [grid-area:1/1]" aria-hidden="true">
            {[80, 90, 100, 110, 120, 130, 140, 150].map((tick) => (
              <span key={tick} className="h-2 w-px bg-[#5d6a7f]" />
            ))}
          </div>
          <input
            type="range"
            min={80}
            max={150}
            value={tolerance}
            aria-label={`${id} tolerance`}
            onChange={(e) => setTolerance(Number(e.target.value))}
            className="h-4 w-full appearance-none bg-size-[100%_2px] bg-center bg-no-repeat [grid-area:1/1] [&::-webkit-slider-thumb]:h-4 [&::-webkit-slider-thumb]:w-1 [&::-webkit-slider-thumb]:appearance-none [&::-webkit-slider-thumb]:rounded-xs [&::-webkit-slider-thumb]:bg-[#bdd6f2]"
            style={{ backgroundImage: `linear-gradient(to right, #bdd6f2 ${fill}%, #5d6a7f ${fill}%)` }}
          />
        </div>
        <div className="mt-[13px] grid grid-cols-[96px_1fr_auto] px-1.5 leading-4">
          <span>80%</span>
          <b>{tolerance}%</b>
          <span>150%</span>
        </div>
      </div>
    </div>
  );
};

const RestrictRow = ({ id, label }: Readonly<{ id: string; label: ReactNode }>) => (
  <div className="grid grid-cols-[228px_minmax(0,340fr)_37px_minmax(0,348fr)] pr-[3px]">
    <div className="flex items-center gap-[9px] pb-1 pl-[11px]">
      <Check id={id} defaultChecked />
      <label htmlFor={id}>{label}</label>
    </div>
    <label className="leading-4">
      Minimum Value
      <input className={twJoin(FIELD, "mt-0.5 block")} defaultValue="25 mm" />
    </label>
    <span />
    <label className="leading-4">
      Maximum Value
      <input className={twJoin(FIELD, "mt-0.5 block")} defaultValue="610 mm" />
    </label>
  </div>
);

const COLUMNS = ["Width (mm)", "Height (mm)", "Equivalent Diameter (mm)", "Aspect Ratio", "Velocity (m/s)", "Friction (Pa/m)"];

const SIZES = [
  ["175 mm", "550 mm", "326 mm", "0.32", "0.3 m/s", "0.01 Pa/m"],
  ["175 mm", "600 mm", "339 mm", "0.29", "0.3 m/s", "0.01 Pa/m"],
  ["200 mm", "475 mm", "329 mm", "0.42", "0.3 m/s", "0.01 Pa/m"],
  ["200 mm", "500 mm", "337 mm", "0.4", "0.3 m/s", "0.01 Pa/m"],
  ["200 mm", "550 mm", "352 mm", "0.36", "0.3 m/s", "0.01 Pa/m"],
  ["200 mm", "600 mm", "365 mm", "0.33", "0.2 m/s", "0.00 Pa/m"],
  ["225 mm", "425 mm", "334 mm", "0.53", "0.3 m/s", "0.01 Pa/m"],
  ["225 mm", "450 mm", "343 mm", "0.5", "0.3 m/s", "0.01 Pa/m"],
  ["225 mm", "475 mm", "351 mm", "0.47", "0.3 m/s", "0.01 Pa/m"],
  ["225 mm", "500 mm", "360 mm", "0.45", "0.3 m/s", "0.00 Pa/m"],
  ["225 mm", "550 mm", "375 mm", "0.41", "0.2 m/s", "0.00 Pa/m"],
  ["225 mm", "600 mm", "390 mm", "0.38", "0.2 m/s", "0.00 Pa/m"],
  ["250 mm", "375 mm", "333 mm", "0.67", "0.3 m/s", "0.01 Pa/m"],
];

const SizeTable = () => (
  <div className="mt-[22px] flex min-h-0 flex-1 overflow-hidden px-2">
    <div className="min-w-0 flex-1">
      <table className="w-full table-fixed border-separate border-spacing-0 text-left">
        <colgroup>
          <col className="w-[146px]" />
          <col className="w-[145px]" />
          <col className="w-[146px]" />
          <col className="w-[145px]" />
          <col className="w-[175px]" />
          <col />
        </colgroup>
        <thead>
          <tr className="h-7 bg-[#2a2f3b] text-[13px] leading-4">
            {COLUMNS.map((column) => (
              <th key={column} className="overflow-hidden border-r border-b border-[#3d4656] p-0 pl-2 font-normal whitespace-nowrap">
                {column}
              </th>
            ))}
          </tr>
        </thead>
        <tbody>
          {SIZES.map((row, index) => (
            <tr key={index} className="h-7 leading-4 odd:bg-[#474f61] even:bg-[#3e4756]">
              {row.map((cell, i) => (
                <td key={i} className="border-r border-b border-r-[#545f70] border-b-[#5a687a] p-0 pb-px pl-2">
                  {cell}
                </td>
              ))}
            </tr>
          ))}
        </tbody>
      </table>
    </div>
    <div className="mt-[30px] ml-[3px] h-5 w-1.5 rounded-full bg-[#5d6b80]" />
  </div>
);

const SizingPane = () => (
  <aside className="flex min-w-0 flex-col border-l-2 border-[#2e3441] bg-[#474f61] font-[Roboto,sans-serif] text-[12px] text-[#eceef1]">
    <div className="flex h-[17px] shrink-0 items-center justify-between bg-[#222933] pl-0.5 font-[Open_Sans,sans-serif] text-[11px]">
      <h1>MEP Sizing</h1>
      <button type="button" aria-label="Close panel">
        <Chevron d="m1 1 8 8M9 1 1 9" className="text-[#d0d4da]" />
      </button>
    </div>
    <p className="h-[21px] shrink-0 pl-[5px] text-[13px] leading-[22px]">Duct: Rectangular</p>
    <h2 className="h-6 shrink-0 bg-[#2e333f] pl-2 text-[13px] leading-6">Sizing Method</h2>
    <ChoiceRow
      name="flow"
      label={<span className="pl-[13px]">Vo<u>l</u>umetric Flow</span>}
      value="28.3 L/s"
      className="h-[70px] shrink-0 pt-[13px]"
    />
    <ToleranceRow id="friction" label={<><u>F</u>riction (≤) and Tolerance</>} value="10.76 Pa/m" />
    <ToleranceRow id="velocity" label={<><u>V</u>elocity (≤) and Tolerance</>} value="0.3 m/s" />
    <ToleranceRow id="aspect" label={<>As<u>p</u>ect Ratio (≤) and Tolerance</>} value="4" />
    <ChoiceRow
      name="roughness"
      label={<span className="pl-[5px]"><u>R</u>oughness</span>}
      value="0.09 mm"
      className="h-[62px] shrink-0"
    />
    <h2 className="h-6 shrink-0 bg-[#2e333f] pl-2 text-[13px] leading-6">Constraints</h2>
    <div className="flex flex-col gap-2.5 pt-4">
      <RestrictRow id="restrict-width" label={<>Restrict <u>W</u>idth</>} />
      <RestrictRow id="restrict-height" label={<>Restrict <u>H</u>eight</>} />
      <div className="flex items-center justify-between pr-[3px] pl-[11px]">
        <div className="flex items-center gap-1">
          <Check id="best" />
          <label htmlFor="best">Show <u>B</u>est Sizes</label>
        </div>
        <button type="button" className="flex h-6 items-center gap-1.5 rounded-xs border border-[#8593a6] px-2.5 text-[13px] font-medium">
          <Icon size={16}>
            <path d="M5 4h10v2H5v3L0 5l5-4z" fill="#2a9bf0" />
            <path d="M10 10H1v2h9v3l5-4-5-4z" fill="#fb3838" />
          </Icon>
          <span><u>S</u>wap Height and Width</span>
        </button>
      </div>
    </div>
    <SizeTable />
    <div className="mt-[13px] mb-[5px] flex shrink-0 items-center justify-between pr-[3px] pl-[5px] text-[13px]">
      <a href="#help" className="text-[#5fc0ee]">Link To Online Help</a>
      <button type="button" disabled className="h-6 w-14 rounded-xs bg-[#2a6a90] font-medium text-[#84949f]">
        <u>A</u>pply
      </button>
    </div>
  </aside>
);

const PICK = <path d="m8 6 7 7h-3l2 3-2 1-2-3-2 2z" fill="#fff" stroke={BG} strokeWidth=".4" />;

const STATUS_ICONS: { name: string; width: string; art: ReactNode }[] = [
  {
    name: "Select links",
    width: "w-[26px]",
    art: (
      <>
        <rect x="1" y="2" width="6" height="3.5" rx="1.5" stroke="#f0a36b" />
        <rect x="8" y="2" width="6" height="3.5" rx="1.5" stroke="#f0a36b" />
        {PICK}
      </>
    ),
  },
  {
    name: "Select underlay",
    width: "w-[26px]",
    art: (
      <>
        <path d="m1 8 6-5h4l-4 5zM1 12l3-3h5l-2 3z" fill="#7cc3fa" />
        <path d="m10 1 5 5M15 1l-5 5" stroke="#fb6464" strokeWidth="2" />
        {PICK}
      </>
    ),
  },
  {
    name: "Select pinned",
    width: "w-[26px]",
    art: (
      <>
        <path d="M2 1h8v2H9v4l2 2H1l2-2V3H2zM5 9h2v4H5z" fill="#c4c4c4" />
        {PICK}
      </>
    ),
  },
  {
    name: "Select by face",
    width: "w-[26px]",
    art: (
      <>
        <path d="m1 4 8-3v11l-8 3z" fill="#7cc3fa" />
        <path d="m10 1 5 5M15 1l-5 5" stroke="#fb6464" strokeWidth="2" />
        {PICK}
      </>
    ),
  },
  {
    name: "Drag on selection",
    width: "w-[26px]",
    art: (
      <>
        <path d="M7.5 1v13M1 7.5h12M5.5 3l2-2 2 2M3 5.5l-2 2 2 2" stroke="#eee" />
        {PICK}
      </>
    ),
  },
  {
    name: "Background processes",
    width: "w-[26px]",
    art: <circle cx="8" cy="8" r="6" stroke="#858c98" strokeWidth="2.5" strokeDasharray="2.5 2.21" />,
  },
  { name: "Filter", width: "w-5", art: <path d="M0 1h16v2l-6 5v8H6V8L0 3z" fill="#c4c4c4" /> },
];

const StatusBar = () => (
  <footer className="flex h-[25px] shrink-0 items-center bg-[#3b4453] pl-px text-[11px] text-[#f0f1f3]">
    <span className="w-[879px] shrink-0">Click to select, TAB for alternates, CTRL adds, SHIFT unselects.</span>
    <button type="button" aria-label="Worksets" className="shrink-0">
      <Icon size={17}>
        <path d="M1 3c1-2 4-2 5 0v8c-1 1-4 1-5 0z" fill="#62b5f6" />
        <path d="M8 2c1-2 4-2 5 0v6H8z" fill="#f0a36b" />
        <path d="M4 6c1-2 5-2 6 0v9c-1 2-5 2-6 0z" fill="#4bb57c" />
        <path d="m10 16 5-5M14 8v3h3" stroke="#7cc3fa" strokeWidth="2" />
      </Icon>
    </button>
    <Chevron d="m2 3 3 3 3-3" className="ml-[201px] shrink-0 text-[#6f7784]" />
    <span className="ml-3 flex shrink-0 items-center gap-0.5 text-[#a0a6b0]">
      <Icon size={15}>
        <path d="M6 1h8v5l-3 2-2-2H6zM2 6h6v5h3v4H0v-4h2z" fill="#9a9fa9" />
      </Icon>
      :0
    </span>
    <button type="button" aria-label="Design options" className="ml-7 shrink-0">
      <Icon size={16}>
        <path d="M0 0h16v16H0z" fill="#f4f4f4" />
        <path d="M0 0h16v3H0z" fill="#8f8f8f" />
        <path d="M2 6.5h2M5 6.5h9M2 9.5h2M5 9.5h9M2 12.5h2M5 12.5h9" stroke="#444" />
      </Icon>
    </button>
    <button type="button" aria-label="Exclude options" className="ml-2.5 shrink-0">
      <Icon size={16}>
        <path d="M2 0h14v12H2z" fill="#9a9fa9" />
        <path d="M4 5.5h2M7 5.5h7M4 8.5h2M7 8.5h7" stroke={BG} />
        <path d="M0 12h5v-2l4 3.5L5 16v-2H0z" fill="#9a9fa9" />
      </Icon>
    </button>
    <select disabled aria-label="Active option" className="ml-[11px] w-[190px] shrink-0 appearance-none text-[12px] text-[#868d99]">
      <option>Main Model</option>
    </select>
    <Chevron d="m2 3 3 3 3-3" className="shrink-0 text-[#6f7784]" />
    <div className="ml-auto flex items-center pr-[82px]">
      {STATUS_ICONS.map(({ name, width, art }) => (
        <button key={name} type="button" aria-label={name} className={twJoin("flex justify-center", width)}>
          <Icon size={17}>{art}</Icon>
        </button>
      ))}
      :0
    </div>
  </footer>
);

export default function App() {
  return (
    <div className="flex h-screen flex-col overflow-hidden bg-[#1d1b1c] font-[Open_Sans,sans-serif]">
      <Ribbon />
      <div className="h-[3px] shrink-0 border-t border-[#222933] bg-[#4f5b69]" />
      <main className="grid min-h-0 flex-1 grid-cols-2 grid-rows-[minmax(0,1fr)] gap-[3px] border-b-2 border-[#2b313d] bg-[#4f5b69]">
        <ViewPane />
        <SizingPane />
      </main>
      <StatusBar />
      <div className="h-[3px] shrink-0" />
    </div>
  );
}
